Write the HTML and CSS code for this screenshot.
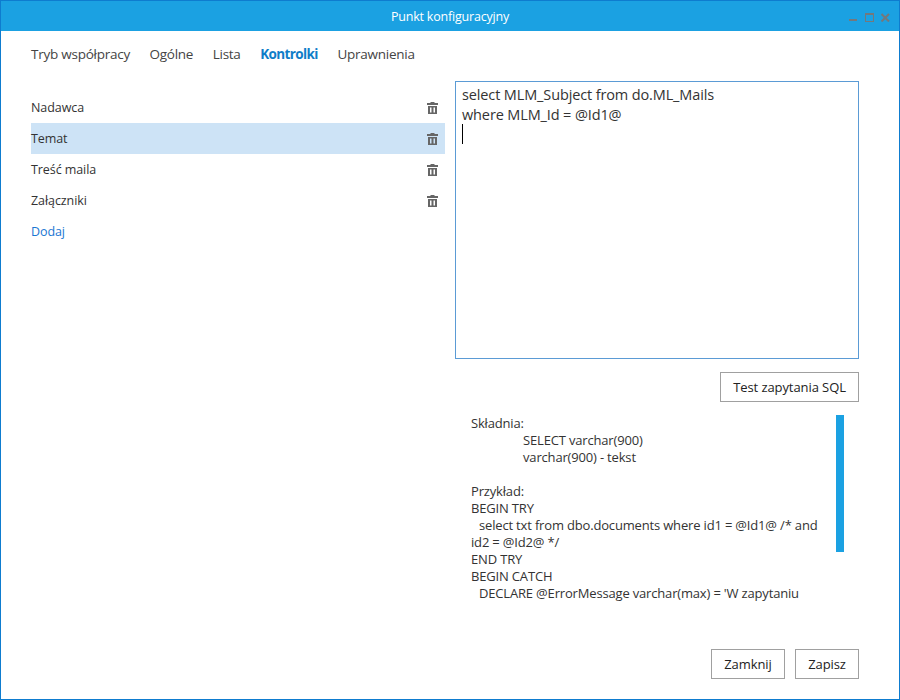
FILE: index.html
```html
<!DOCTYPE html>
<html lang="pl">
<head>
<meta charset="utf-8">
<title>Punkt konfiguracyjny</title>
<link rel="stylesheet" href="styles.css">
</head>
<body>
<div class="window">
  <header class="titlebar">
    <span class="title">Punkt konfiguracyjny</span>
    <div class="controls">
      <svg width="9" height="9" viewBox="0 0 9 9"><rect x="0" y="6" width="8" height="2" fill="#74787c"/></svg>
      <svg width="9" height="9" viewBox="0 0 9 9"><rect x="0" y="0" width="9" height="9" fill="#74787c"/><rect x="1" y="2" width="7" height="6" fill="#1ba1e2"/></svg>
      <svg width="9" height="9" viewBox="0 0 9 9"><path d="M0.5 1L8 8.5M8 1L0.5 8.5" fill="none" stroke="#74787c" stroke-width="2"/></svg>
    </div>
  </header>
  <nav class="tabs">
    <span class="tab">Tryb współpracy</span>
    <span class="tab">Ogólne</span>
    <span class="tab">Lista</span>
    <span class="tab active">Kontrolki</span>
    <span class="tab">Uprawnienia</span>
  </nav>
  <main class="content">
    <section class="left">
      <div class="row"><span>Nadawca</span><svg class="trash" width="11" height="12" viewBox="0 0 11 12"><path d="M3.5 0H7.5V1H11V3H0V1H3.5ZM1 4H10V12H1ZM3 5.5V10.5H4.5V5.5ZM6.5 5.5V10.5H8V5.5Z" fill="#666" fill-rule="evenodd"/></svg></div>
      <div class="row selected"><span>Temat</span><svg class="trash" width="11" height="12" viewBox="0 0 11 12"><path d="M3.5 0H7.5V1H11V3H0V1H3.5ZM1 4H10V12H1ZM3 5.5V10.5H4.5V5.5ZM6.5 5.5V10.5H8V5.5Z" fill="#666" fill-rule="evenodd"/></svg></div>
      <div class="row"><span>Treść maila</span><svg class="trash" width="11" height="12" viewBox="0 0 11 12"><path d="M3.5 0H7.5V1H11V3H0V1H3.5ZM1 4H10V12H1ZM3 5.5V10.5H4.5V5.5ZM6.5 5.5V10.5H8V5.5Z" fill="#666" fill-rule="evenodd"/></svg></div>
      <div class="row"><span>Załączniki</span><svg class="trash" width="11" height="12" viewBox="0 0 11 12"><path d="M3.5 0H7.5V1H11V3H0V1H3.5ZM1 4H10V12H1ZM3 5.5V10.5H4.5V5.5ZM6.5 5.5V10.5H8V5.5Z" fill="#666" fill-rule="evenodd"/></svg></div>
      <div class="row add">Dodaj</div>
    </section>
    <section class="right">
      <div class="editor">
        <div>select MLM_Subject from do.ML_Mails</div>
        <div>where MLM_Id = @Id1@</div>
        <div class="caret"></div>
      </div>
      <div class="test-row"><button class="btn test">Test zapytania SQL</button></div>
      <div class="help">
        <div class="help-text">
          <div>Składnia:</div>
          <div class="ind">SELECT varchar(900)</div>
          <div class="ind">varchar(900) - tekst</div>
          <div>&nbsp;</div>
          <div>Przykład:</div>
          <div>BEGIN TRY</div>
          <div class="sub">select txt from dbo.documents where id1 = @Id1@ /* and</div>
          <div>id2 = @Id2@ */</div>
          <div>END TRY</div>
          <div>BEGIN CATCH</div>
          <div class="sub">DECLARE @ErrorMessage varchar(max) = 'W zapytaniu</div>
        </div>
        <div class="scrollbar"></div>
      </div>
    </section>
  </main>
  <footer class="footer">
    <button class="btn close">Zamknij</button>
    <button class="btn save">Zapisz</button>
  </footer>
</div>
</body>
</html>
```
FILE: styles.css
```css
* { box-sizing: border-box; }
html, body { margin: 0; padding: 0; }
body {
  width: 900px;
  height: 700px;
  overflow: hidden;
  background: #fff;
  color: #333;
  font-family: "Open Sans", "Noto Sans", sans-serif;
}
.window {
  width: 900px;
  height: 700px;
  border: 1px solid #0e7ccf;
  display: flex;
  flex-direction: column;
  background: #fff;
}
.titlebar {
  height: 30px;
  flex: none;
  background: #1ba1e2;
  display: flex;
  align-items: center;
  justify-content: center;
  position: relative;
}
.title { color: #fff; font-size: 12.5px; letter-spacing: -0.2px; }
.controls {
  position: absolute;
  right: 9px;
  top: 12px;
  display: flex;
  gap: 7px;
}
.controls svg { display: block; flex: none; }
.tabs {
  display: flex;
  gap: 19.5px;
  height: 50px;
  padding: 14px 0 0 30px;
  font-size: 13.5px;
  line-height: 19px;
  letter-spacing: -0.25px;
  color: #444;
  flex: none;
}
.tab.active { color: #0f7dc8; font-weight: 700; letter-spacing: -0.6px; }
.content {
  flex: 1;
  display: flex;
  min-height: 0;
  padding-left: 30px;
}
.left {
  width: 414px;
  flex: none;
  padding-top: 11px;
  font-size: 12.5px;
  letter-spacing: -0.08px;
}
.row {
  height: 31px;
  display: flex;
  align-items: center;
  justify-content: space-between;
  padding-right: 7px;
  color: #333;
}
.row.selected { background: #cde3f6; }
.row.add { color: #1a76d2; }
.trash { display: block; }
.right {
  width: 404px;
  margin-left: 10px;
  flex: none;
}
.editor {
  height: 278px;
  border: 1px solid #5b9bd5;
  padding: 3px 6px;
  font-size: 14.5px;
  line-height: 20px;
  letter-spacing: -0.13px;
  color: #333;
}
.caret { width: 1px; height: 20px; margin-top: -1px; background: #000; }
.test-row {
  display: flex;
  justify-content: flex-end;
  margin-top: 13px;
}
.btn {
  height: 30px;
  background: #fff;
  border: 1px solid #a0a0a0;
  color: #222;
  font-family: inherit;
  font-size: 13px;
  font-weight: 400;
  letter-spacing: -0.08px;
  padding: 0;
}
.test { width: 139px; }
.help {
  display: flex;
  margin-top: 13px;
  height: 190px;
  position: relative;
}
.help-text {
  width: 360px;
  margin-left: 16px;
  font-size: 13px;
  line-height: 17px;
  letter-spacing: -0.17px;
  color: #333;
}
.ind { padding-left: 52px; }
.sub { padding-left: 8px; }
.scrollbar {
  position: absolute;
  left: 381px;
  top: 0;
  width: 8px;
  height: 137px;
  background: #1ba1e2;
}
.footer {
  flex: none;
  height: 50px;
  display: flex;
  justify-content: flex-end;
  gap: 10px;
  padding-right: 40px;
  padding-top: 0;
}
.close { width: 74px; }
.save { width: 64px; }
```
